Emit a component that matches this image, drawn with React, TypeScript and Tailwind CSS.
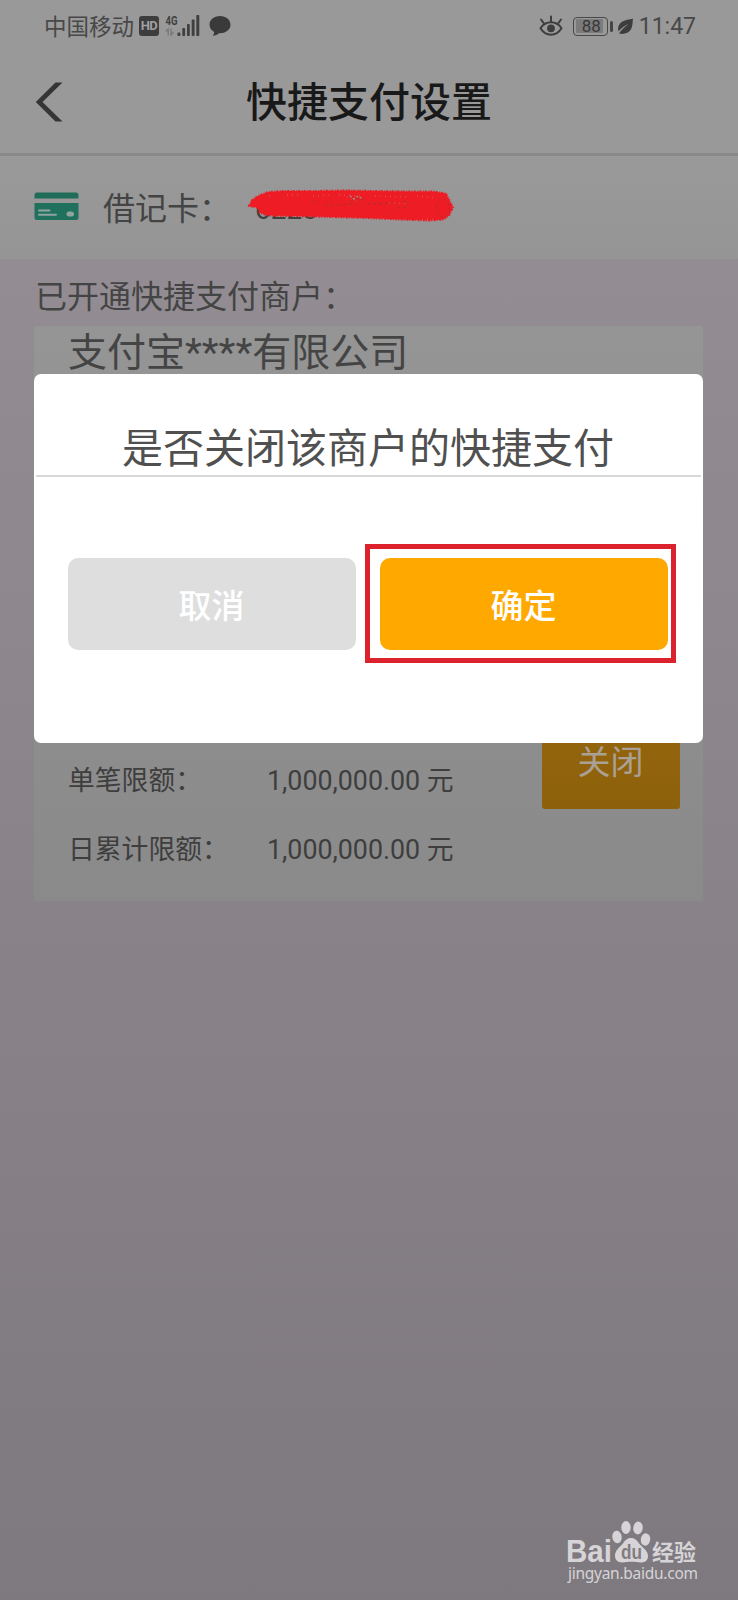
import type { ReactNode } from "react";

type Limit = {
  label: string;
  value: string;
};

const limits: Limit[] = [
  { label: "单笔限额：", value: "1,000,000.00 元" },
  { label: "日累计限额：", value: "1,000,000.00 元" },
];

function SignalIcon() {
  return (
    <svg width="36" height="24" viewBox="0 0 36 24" className="ml-[6px]">
      <text x="0.5" y="11" fontSize="13" fontWeight="700" fill="#404040" textLength="12" lengthAdjust="spacingAndGlyphs" fontFamily="Roboto, sans-serif">4G</text>
      <path d="M1 17.5l2.200-2.500V21.500M6 14.500v6.500l2.500-3" stroke="#777" strokeWidth="1.300" fill="none" />
      <g fill="#404040">
        <rect x="12.500" y="18.500" width="2.800" height="3.500" rx="0.800" />
        <rect x="17.300" y="14" width="2.800" height="8" rx="0.800" />
        <rect x="22" y="10" width="2.800" height="12" rx="0.800" />
        <rect x="26.700" y="5.500" width="2.900" height="16.500" rx="0.800" />
        <rect x="31.300" y="1" width="3" height="21" rx="0.800" />
      </g>
    </svg>
  );
}

function EyeIcon() {
  return (
    <svg width="24" height="22" viewBox="0 0 24 22" fill="none" stroke="#3d3d3d">
      <path d="M1.500 13.300C4 9.300 7.700 7.300 12 7.300s8 2 10.500 6c-2.500 4.100-6.200 6.400-10.500 6.400S4 17.400 1.500 13.300z" strokeWidth="2" />
      <circle cx="12" cy="13.300" r="3.900" fill="#3d3d3d" stroke="none" />
      <path d="M12 6.500V1.500M4.500 7.800L2 4.500M19.500 7.800L22 4.500" strokeWidth="2" strokeLinecap="round" />
    </svg>
  );
}

function BatteryIcon() {
  return (
    <div className="ml-[10px] flex items-center">
      <div className="flex h-[19px] w-[35px] rounded-[4px] border-[1.5px] border-[#484848] p-[1.5px]">
        <div className="flex w-[27px] items-center justify-center rounded-[1px] bg-[#7b7b7b] pl-[4px] text-[17px] leading-none text-[#383838]">
          88
        </div>
      </div>
      <div className="ml-[2px] h-[11px] w-[2.500px] rounded-full bg-[#454545]" />
    </div>
  );
}

function LeafIcon() {
  return (
    <svg width="17" height="17" viewBox="0 0 17 17" className="ml-[4px]">
      <path d="M16 .5C13 1.800 6.500 1.500 3 5.500.8 8 .8 11 1.500 13.200 5 9.500 8 7.500 11.500 6 8 8.500 4.500 11.500 2 15.500c5 1.200 9.500-.3 11.800-4C16 8 15.500 3.500 16 .5z" fill="#3d3d3d" />
    </svg>
  );
}

function StatusBar() {
  return (
    <div className="flex h-[52px] items-center pl-[44px] pr-[42px]">
      <span className="pt-[2px] text-[22.500px] leading-[30px] text-[#484848]">中国移动</span>
      <span className="ml-[5px] flex h-[20px] w-[20px] items-center justify-center rounded-[3px] bg-[#3d3d3d] text-[13px] font-bold tracking-[-0.500px] text-[#a0a0a0]">
        HD
      </span>
      <SignalIcon />
      <svg width="22" height="22" viewBox="0 0 22 22" className="ml-[8px]">
        <path d="M11 1C5 1 .5 4.700.5 9.500c0 3.300 1.800 6 4.700 7.400-.1 1.600-.8 2.900-1.500 3.800 2.600-.2 4.800-1.200 6.300-2.500C16.500 18.500 21.500 14.800 21.500 9.700 21.500 4.700 17 1 11 1z" fill="#3a3a3a" />
      </svg>
      <div className="ml-auto flex items-center">
        <EyeIcon />
        <BatteryIcon />
        <LeafIcon />
        <span className="ml-[5px] pt-[2px] text-[23px] leading-[30px] text-[#484848]">11:47</span>
      </div>
    </div>
  );
}

function CardIcon() {
  return (
    <svg width="45" height="29" viewBox="0 0 45 29" className="-mt-[3px]">
      <path d="M3 .5h39a2.500 2.500 0 0 1 2.500 2.500v3.500H.5V3A2.500 2.500 0 0 1 3 .5z" fill="#1f6c59" />
      <path d="M.5 11h44v14.500a2.500 2.500 0 0 1-2.500 2.500H3a2.500 2.500 0 0 1-2.500-2.500z" fill="#1f705d" />
      <path d="M5 18.500h10.500M5 22.700h17" stroke="#91a39e" strokeWidth="2" strokeLinecap="round" />
      <rect x="32.500" y="19.500" width="7.500" height="5" rx="2.500" fill="#91a39e" />
    </svg>
  );
}

// hides the card number
function Scribble() {
  const outline = "M2 18L5 12l6-4 10-4 16-1 30 0 30-.5 30 .5 34 .5 26 0 12 2 3 6 4 8-4 8-6 4-14 1-28-1-34-1.500-36-1-34-1-22-.2-10-1-5-2-2-5z";
  return (
    <svg width="212" height="40" viewBox="0 0 212 40" className="absolute left-[-1px] top-0">
      <path d={outline} fill="#ee1c24" />
      <path d={outline} fill="none" stroke="#ee1c24" strokeWidth="2" strokeDasharray="2 1.500 1 1" />
      <path d="M22 8l5-1M40 7h14M66 8l18-1M92 7l24 1M128 8l32 1M170 8l18 2M142 15l24 1M100 9l10 4M170 32l16-1" stroke="#d55450" strokeWidth="1.300" strokeDasharray="1 4" />
      <path d="M78 17h16l8-1h12M104 13l5-3 4 3 4-2M120 16l26-1M156 13l8 3M66 14h6M150 20l10-1" stroke="#a9322f" strokeWidth="1" strokeDasharray="3 3" fill="none" />
      <path d="M103 8l4 3 4-3 5 3" stroke="#9c8a8a" strokeWidth="1.500" strokeDasharray="2 2" fill="none" />
      <ellipse cx="196" cy="20" rx="6.500" ry="9" fill="none" stroke="#b82c30" strokeDasharray="2 2" />
    </svg>
  );
}

function Watermark() {
  return (
    <svg width="140" height="68" viewBox="-4 0 140 68" className="absolute bottom-[14px] right-[34px]" fill="#d6d4d7">
      <text x="-2" y="43.500" fontSize="31" fontWeight="700" textLength="46" lengthAdjust="spacingAndGlyphs" fontFamily="Liberation Sans, sans-serif">Bai</text>
      <ellipse cx="49" cy="19" rx="4.700" ry="6.200" transform="rotate(-8 49 19)" />
      <ellipse cx="58" cy="9.500" rx="4.700" ry="6.500" />
      <ellipse cx="70" cy="10" rx="4.700" ry="6.400" transform="rotate(8 70 10)" />
      <ellipse cx="77.500" cy="21.500" rx="4.700" ry="6.200" transform="rotate(10 77.500 21.500)" />
      <path d="M63 20c4 0 6 2.500 8.500 6 3 3.500 8.500 6.500 8.500 12 0 4.500-3 6.500-7 6.500-3.500 0-6-.7-9.500-.7s-6 .7-9.500.7c-4 0-7-2.300-7-6.700 0-5.500 4.500-8.300 7.500-11.800C57 22.500 59 20 63 20z" />
      <text x="53" y="40.500" fontSize="20" fontWeight="700" fill="#817c82" textLength="21" lengthAdjust="spacingAndGlyphs" fontFamily="Liberation Sans, sans-serif">du</text>
      <text x="84" y="41.500" fontSize="22" fontWeight="700" textLength="44" fontFamily="Noto Sans CJK SC, sans-serif">经验</text>
      <text x="0" y="60.500" fontSize="15.500" textLength="130" fontFamily="Noto Sans, sans-serif">jingyan.baidu.com</text>
    </svg>
  );
}

function DialogButton({ className, children }: { className: string; children: ReactNode }) {
  return (
    <button className={`block h-[92px] w-[288px] rounded-[10px] pt-[4px] pr-[1px] text-[33px] font-medium leading-none text-white ${className}`}>
      {children}
    </button>
  );
}

function ConfirmDialog() {
  return (
    <div className="absolute left-[34px] top-[374px] h-[369px] w-[669px] rounded-[7px] bg-white px-[2px] pt-[43px]">
      <h2 className="h-[60px] border-b-2 border-[#d8d8d8] pr-[1px] text-center text-[41px] leading-[64px] text-[#505050]">
        是否关闭该商户的快捷支付
      </h2>
      <div className="mt-[81px] flex gap-[24px] pl-[32px]">
        <DialogButton className="bg-[#dedede]">取消</DialogButton>
        <div className="relative">
          <DialogButton className="bg-[#ffa900]">确定</DialogButton>
          <div className="absolute left-[-15px] top-[-14px] h-[119px] w-[311px] border-[5px] border-[#dc232d]" />
        </div>
      </div>
    </div>
  );
}

export default function App() {
  return (
    <div className="relative h-[1600px] w-[738px] overflow-hidden bg-linear-to-b from-[#979197] to-[#7e797e] font-['Roboto','Noto_Sans_CJK_SC',sans-serif]">
      <header className="h-[156px] border-b-[3px] border-[#898989] bg-[#999]">
        <StatusBar />
        <div className="relative flex h-[100px] items-center justify-center">
          <svg width="28" height="40" viewBox="0 0 28 40" className="absolute left-[35px] top-[30px]">
            <path d="M20.500.5h7L7.500 20l20 19.500h-7L.8 20z" fill="#353535" />
          </svg>
          <h1 className="pt-[1px] text-[41px] font-medium leading-[60px] text-[#191919]">快捷支付设置</h1>
        </div>
      </header>

      <section className="flex h-[103px] items-center bg-linear-to-b from-[#999] to-[#959595] pl-[34px]">
        <CardIcon />
        <span className="ml-[24px] pt-[3px] text-[32px] leading-[48px] text-[#444]">借记卡：</span>
        <div className="relative ml-[17px] h-[40px] w-[210px] pl-[7px] text-[28px] leading-[44px] text-[#414141]">
          6228
          <Scribble />
        </div>
      </section>

      <p className="h-[67px] pl-[35px] pt-[13.500px] text-[32px] leading-[48px] text-[#444]">已开通快捷支付商户：</p>

      <section className="mx-[34px] mr-[35px] flex h-[575px] flex-col rounded-[3px] bg-linear-to-b from-[#959595] to-[#8a8a8a] pl-[34px] pr-[23px]">
        <p className="h-[48px] text-[39px] leading-[55px] text-[#444]">支付宝****有限公司</p>
        <div className="mt-[371px] flex justify-between">
          <div className="pt-[1px]">
            {limits.map((limit) => (
              <div key={limit.label} className="flex h-[69.500px] items-center text-[26.800px] leading-[40px] text-[#3e3e3e]">
                <span className="w-[199px]">{limit.label}</span>
                <span>{limit.value}</span>
              </div>
            ))}
          </div>
          <button className="-mt-[28px] h-[92px] w-[138px] rounded-[3px] bg-linear-to-b from-[#94660d] to-[#8d600b] pb-[2px] pr-[1px] text-[33px] leading-none text-[#aaa093]">
            关闭
          </button>
        </div>
      </section>

      <Watermark />
      <ConfirmDialog />
    </div>
  );
}
